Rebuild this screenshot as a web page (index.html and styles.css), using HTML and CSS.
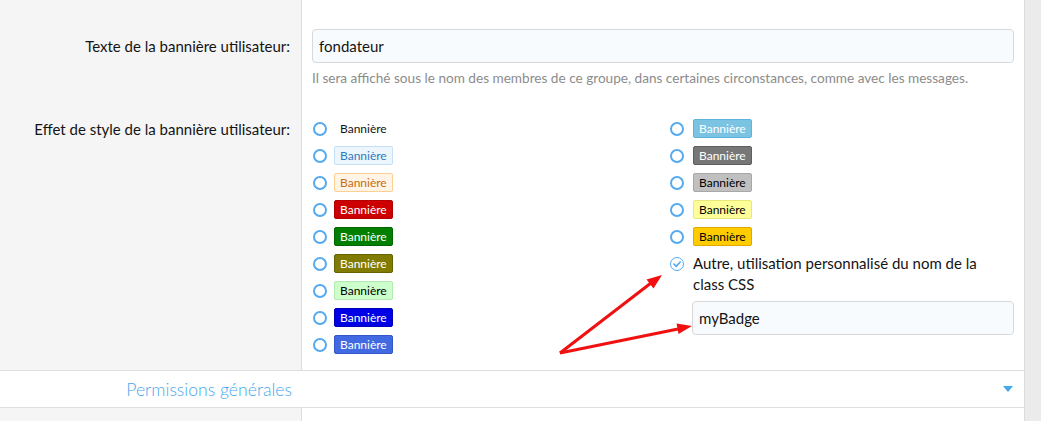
FILE: index.html
```html
<!DOCTYPE html>
<html lang="fr">
<head>
  <meta charset="UTF-8">
  <title>Bannière utilisateur</title>
  <link rel="stylesheet" href="styles.css">
</head>
<body>
  <div class="page">
    <div class="form">
      <dl class="row row-text">
        <dt>Texte de la bannière utilisateur:</dt>
        <dd>
          <input class="input" type="text" value="fondateur">
          <div class="hint">Il sera affiché sous le nom des membres de ce groupe, dans certaines circonstances, comme avec les messages.</div>
        </dd>
      </dl>

      <dl class="row row-style">
        <dt>Effet de style de la bannière utilisateur:</dt>
        <dd>
          <div class="choices">
            <div class="col">
              <label class="opt"><span class="radio"></span><span class="badge plain">Bannière</span></label>
              <label class="opt"><span class="radio"></span><span class="badge b-primary">Bannière</span></label>
              <label class="opt"><span class="radio"></span><span class="badge b-accent">Bannière</span></label>
              <label class="opt"><span class="radio"></span><span class="badge b-red">Bannière</span></label>
              <label class="opt"><span class="radio"></span><span class="badge b-green">Bannière</span></label>
              <label class="opt"><span class="radio"></span><span class="badge b-olive">Bannière</span></label>
              <label class="opt"><span class="radio"></span><span class="badge b-lightgreen">Bannière</span></label>
              <label class="opt"><span class="radio"></span><span class="badge b-blue">Bannière</span></label>
              <label class="opt"><span class="radio"></span><span class="badge b-royal">Bannière</span></label>
            </div>
            <div class="col">
              <label class="opt"><span class="radio"></span><span class="badge b-sky">Bannière</span></label>
              <label class="opt"><span class="radio"></span><span class="badge b-gray">Bannière</span></label>
              <label class="opt"><span class="radio"></span><span class="badge b-silver">Bannière</span></label>
              <label class="opt"><span class="radio"></span><span class="badge b-yellow">Bannière</span></label>
              <label class="opt"><span class="radio"></span><span class="badge b-gold">Bannière</span></label>
              <label class="opt opt-other">
                <span class="radio checked">
                  <svg viewBox="0 0 14 14" width="14" height="14"><path d="M4 7.2 L6.2 9.3 L10.2 5" fill="none" stroke="#56aaf0" stroke-width="1.7" stroke-linecap="round" stroke-linejoin="round"/></svg>
                </span>
                <span class="other-text">Autre, utilisation personnalisé du nom de la class CSS</span>
              </label>
              <input class="input input-other" type="text" value="myBadge">
            </div>
          </div>
        </dd>
      </dl>

      <div class="section-head">
        <h3>Permissions générales</h3>
        <span class="caret"></span>
      </div>

      <dl class="row row-next">
        <dt></dt>
        <dd></dd>
      </dl>
    </div>

    <svg class="arrows" width="1041" height="421" viewBox="0 0 1041 421">
      <line x1="560" y1="353" x2="651" y2="283" stroke="#f01010" stroke-width="3"/>
      <polygon points="662,275 653.5,288.5 646.5,279.5" fill="#f01010"/>
      <line x1="560" y1="353" x2="678" y2="329" stroke="#f01010" stroke-width="3"/>
      <polygon points="692,326 678.5,334 676.5,323.5" fill="#f01010"/>
    </svg>
  </div>
</body>
</html>
```

FILE: styles.css
```css
* {
  box-sizing: border-box;
}

html, body {
  margin: 0;
  padding: 0;
  background: #ebebeb;
  font-family: 'Lato', 'Open Sans', sans-serif;
  color: #141414;
}

.page {
  position: relative;
  width: 1041px;
  height: 421px;
  overflow: hidden;
}

.form {
  width: 1025px;
  background: #fff;
  border-right: 1px solid #dcdcdc;
}

.row {
  display: grid;
  grid-template-columns: 302px 1fr;
  margin: 0;
}

.row dt {
  background: #f5f5f5;
  border-right: 1px solid #dedede;
  text-align: right;
  padding: 0 11px 0 10px;
  font-size: 15px;
  line-height: 20px;
}

.row dd {
  margin: 0;
  padding: 0 10px 0 10px;
}

.row-text dt {
  padding-top: 36px;
}

.row-text dd {
  padding-top: 29px;
  padding-bottom: 14px;
}

.row-style dt {
  padding-top: 19px;
}

.row-style dd {
  padding-top: 15px;
  padding-bottom: 12px;
}

.row-next {
  height: 14px;
}

.input {
  display: block;
  width: 100%;
  height: 34px;
  padding: 0 6px;
  border: 1px solid #d8d8d8;
  border-radius: 4px;
  background: #f8fbfe;
  font-family: inherit;
  font-size: 15px;
  color: #141414;
  outline: none;
}

.hint {
  margin-top: 7px;
  font-size: 13.6px;
  line-height: 16px;
  color: #8c8c8c;
}

.choices {
  display: grid;
  grid-template-columns: 1fr 1fr;
  column-gap: 12px;
}

.opt {
  display: flex;
  align-items: center;
  height: 27px;
  padding-left: 1px;
}

.radio {
  flex: none;
  width: 14px;
  height: 14px;
  border: 2px solid #56aaf0;
  border-radius: 50%;
  margin-right: 7px;
}

.radio.checked {
  border-width: 1.5px;
  display: flex;
  align-items: center;
  justify-content: center;
}

.radio.checked svg {
  flex: none;
}

.col:last-child .radio {
  margin-right: 9px;
}

.badge {
  display: inline-block;
  height: 19px;
  padding: 0 5px;
  font-size: 12px;
  line-height: 17px;
  border: 1px solid transparent;
  border-radius: 2px;
}

.plain { color: #141414; }
.b-primary { background: #edf6fd; border-color: #c3e0f7; color: #2f7bc0; }
.b-accent { background: #fff4e6; border-color: #fdcf93; color: #c66c10; }
.b-red { background: #cc0000; border-color: #b30000; color: #fff; }
.b-green { background: #007f00; border-color: #006600; color: #fff; }
.b-olive { background: #817c00; border-color: #666200; color: #fff; }
.b-lightgreen { background: #ccffcc; border-color: #b2ebb2; color: #000; }
.b-blue { background: #0000e6; border-color: #0000b8; color: #fff; }
.b-royal { background: #4169e1; border-color: #3456c8; color: #fff; }
.b-sky { background: #7ac3e3; border-color: #5fb4da; color: #fff; }
.b-gray { background: #777; border-color: #5e5e5e; color: #fff; }
.b-silver { background: #c0c0c0; border-color: #a8a8a8; color: #000; }
.b-yellow { background: #ffff99; border-color: #e8e87a; color: #000; }
.b-gold { background: #ffcc00; border-color: #e0a800; color: #000; }

.opt-other {
  height: auto;
  align-items: flex-start;
  padding-top: 3px;
}

.opt-other .radio {
  margin-top: 3.5px;
}

.other-text {
  max-width: 305px;
  font-size: 15px;
  line-height: 21px;
}

.input-other {
  width: calc(100% - 23px);
  margin: 6px 0 0 23px;
}

.section-head {
  display: flex;
  align-items: center;
  height: 38px;
  border-top: 1px solid #dedede;
  border-bottom: 1px solid #dedede;
  background: #fff;
  padding-right: 11px;
}

.section-head h3 {
  margin: 0;
  width: 302px;
  padding-right: 10px;
  text-align: right;
  font-size: 17.6px;
  font-weight: 300;
  color: #47a7eb;
}

.caret {
  margin-left: auto;
  width: 0;
  height: 0;
  border-left: 5px solid transparent;
  border-right: 5px solid transparent;
  border-top: 6px solid #47a7eb;
}

.arrows {
  position: absolute;
  left: 0;
  top: 0;
  pointer-events: none;
}
```
